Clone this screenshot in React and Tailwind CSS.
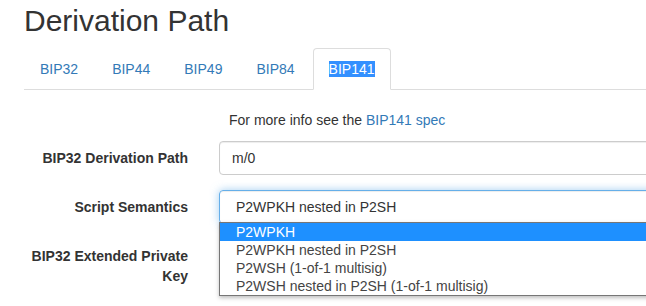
export default function App() {
  const tabs = ["BIP32", "BIP44", "BIP49", "BIP84", "BIP141"];
  const options = [
    "P2WPKH",
    "P2WPKH nested in P2SH",
    "P2WSH (1-of-1 multisig)",
    "P2WSH nested in P2SH (1-of-1 multisig)"
  ];

  return (
    <div className="relative h-[306px] w-[646px] overflow-hidden bg-white pl-6 font-['Liberation_Sans',Arial,sans-serif] text-[14px] leading-5 text-[#333]">
      <h2 className="mt-1 text-[30px] leading-[33px] font-normal">Derivation Path</h2>

      <ul className="mt-[11px] flex w-[700px] border-b border-[#ddd]">
        {tabs.map((tab, i) => {
          const active = i === tabs.length - 1;
          return (
            <li key={tab} className="-mb-px mr-[2px]">
              {active ? (
                <div className="rounded-t-[4px] border border-[#ddd] border-b-white bg-white px-[15px] py-[10px] text-[#337ab7]">
                  <span className="bg-[#3390ff] text-white">{tab}</span>
                </div>
              ) : (
                <div className="border border-transparent px-[15px] py-[10px] text-[#337ab7]">{tab}</div>
              )}
            </li>
          );
        })}
      </ul>

      <p className="mt-5 ml-[205px]">
        For more info see the <span className="text-[#337ab7]">BIP141 spec</span>
      </p>

      <div className="mt-[11px] flex flex-col gap-[15px]">
        <div className="flex items-center">
          <label className="w-[164px] shrink-0 text-right font-bold">BIP32 Derivation Path</label>
          <div className="ml-[31px] h-[34px] w-[520px] shrink-0 rounded-[4px] border border-[#ccc] px-3 py-[6px] shadow-[inset_0_1px_1px_rgba(0,0,0,0.075)]">
            m/0
          </div>
        </div>

        <div className="flex items-center">
          <label className="w-[164px] shrink-0 text-right font-bold">Script Semantics</label>
          <div className="ml-[31px] h-[34px] w-[520px] shrink-0 rounded-[4px] border border-[#66afe9] py-[6px] pl-4 shadow-[inset_0_1px_1px_rgba(0,0,0,0.075),0_0_8px_rgba(102,175,233,0.6)]">
            P2WPKH nested in P2SH
          </div>
        </div>

        <div className="flex items-start">
          <label className="w-[164px] shrink-0 pt-[7px] text-right font-bold">BIP32 Extended Private Key</label>
          <div className="ml-[31px] h-[90px] w-[520px] shrink-0" />
        </div>
      </div>

      <ul className="absolute top-[222px] left-[219px] w-[500px] border border-[#767676] bg-white text-[#444] shadow-[0_2px_4px_rgba(0,0,0,0.25)]">
        {options.map((opt, i) => (
          <li
            key={opt}
            className={i === 0 ? "h-[18px] bg-[#1e90ff] pl-4 leading-[18px] text-white" : "h-[18px] pl-4 leading-[18px]"}
          >
            {opt}
          </li>
        ))}
      </ul>
    </div>
  );
}
